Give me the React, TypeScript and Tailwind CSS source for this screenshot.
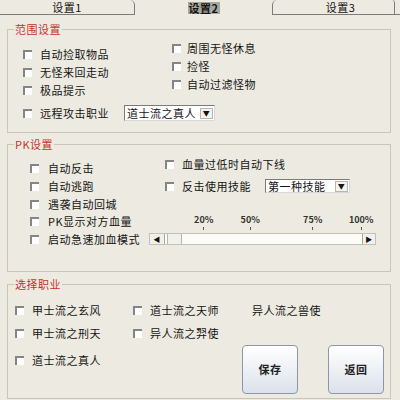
import React from 'react'

const Check = () => (
  <span className="inline-block w-[9px] h-[9px] shrink-0 bg-white border-t-2 border-l-2 border-t-[#858585] border-l-[#858585]" />
)

function Row({ label, gap = 'ml-[8px]', h = 'h-[18px]' }: { label: string; gap?: string; h?: string }) {
  return (
    <div className={`flex items-center ${h}`}>
      <Check />
      <span className={gap}>{label}</span>
    </div>
  )
}

function Select({ value, w, h }: { value: string; w: string; h: string }) {
  return (
    <div className={`flex items-center justify-between bg-white border border-t-[#7a7a7a] border-l-[#7a7a7a] border-r-[#d8d8d8] border-b-[#d8d8d8] ${w} ${h}`}>
      <span className="pl-[2px] leading-none">{value}</span>
      <span className="flex items-center justify-center w-[13px] h-[11px] mr-[1px] bg-[#f4f3ee] border border-[#b9b7ad] text-[7px] leading-none">▼</span>
    </div>
  )
}

function Group({ title, className, children }: { title: string; className: string; children: React.ReactNode }) {
  return (
    <div className={`relative ml-[7px] w-[384px] border border-[#c9c6b6] ${className}`}>
      <span className="absolute -top-[8px] left-[6px] px-[1px] bg-[#edebe1] text-[#c4332c] leading-[14px]">{title}</span>
      {children}
    </div>
  )
}

const scale = [
  { label: '20%', ml: 'ml-[40px]' },
  { label: '50%', ml: 'ml-[17px]' },
  { label: '75%', ml: 'ml-[33px]' },
  { label: '100%', ml: 'ml-[19px]' },
]

export default function App() {
  return (
    <div className="w-[400px] h-[400px] overflow-hidden bg-[#edebe1] text-[11px] tracking-[0.5px] text-[#141414] font-['Noto_Sans_CJK_SC',sans-serif]">
      {/* Tabs */}
      <div className="flex h-[15px]">
        <div className="w-[135px] flex items-center justify-center border-b border-r border-[#7c7c7c] rounded-tr-[5px]">设置1</div>
        <div className="w-[137px] flex items-center justify-center">
          <span className="bg-[#a9a8a0] font-bold leading-[12px] px-[1px]">设置2</span>
        </div>
        <div className="w-[123px] flex items-center justify-center pl-[14px] border-b border-l border-r border-[#7c7c7c] rounded-tl-[5px] rounded-tr-[3px]">设置3</div>
        <div className="flex-1 border-b border-[#7c7c7c]" />
      </div>

      {/* 范围设置 */}
      <Group title="范围设置" className="mt-[14px] h-[104px]">
        <div className="flex">
          <div className="w-[164px] pl-[15px] pt-[15px] flex flex-col">
            <Row label="自动捡取物品" />
            <Row label="无怪来回走动" />
            <Row label="极品提示" />
          </div>
          <div className="pt-[9px] flex flex-col">
            <Row label="周围无怪休息" gap="ml-[6px]" />
            <Row label="捡怪" gap="ml-[6px]" />
            <Row label="自动过滤怪物" gap="ml-[6px]" />
          </div>
        </div>
        <div className="flex items-center h-[18px] mt-[5px] pl-[15px]">
          <Check />
          <span className="ml-[8px] w-[84px]">远程攻击职业</span>
          <Select value="道士流之真人" w="w-[91px]" h="h-[16px]" />
        </div>
      </Group>

      {/* PK设置 */}
      <Group title="PK设置" className="mt-[11px] h-[128px]">
        <div className="flex">
          <div className="w-[157px] pl-[22px] pt-[14px] flex flex-col">
            <Row label="自动反击" gap="ml-[9px]" />
            <Row label="自动逃跑" gap="ml-[9px]" />
            <Row label="遇袭自动回城" gap="ml-[9px]" />
          </div>
          <div className="pt-[10px] flex flex-col">
            <Row label="血量过低时自动下线" />
            <div className="flex items-center h-[18px] mt-[4px]">
              <Check />
              <span className="ml-[8px] w-[83px]">反击使用技能</span>
              <Select value="第一种技能" w="w-[85px]" h="h-[14px]" />
            </div>
          </div>
        </div>
        <div className="pl-[22px]">
          <div className="flex h-[17px]">
            <div className="w-[119px] flex items-center">
              <Check />
              <span className="ml-[9px]">PK显示对方血量</span>
            </div>
            <div className="w-[227px] flex">
              {scale.map((s) => (
                <div key={s.label} className={`w-[30px] flex flex-col items-center pt-[1px] ${s.ml}`}>
                  <span className="text-[9px] leading-[12px] tracking-normal font-bold text-[#333]">{s.label}</span>
                  <span className="w-px h-[3px] mt-[1px] bg-[#555]" />
                </div>
              ))}
            </div>
          </div>
          <div className="flex items-center h-[18px]">
            <div className="w-[119px] flex items-center">
              <Check />
              <span className="ml-[9px]">启动急速加血模式</span>
            </div>
            <div className="w-[227px] h-[12px] flex bg-[#fbfbf8] border border-[#c3c1b6]">
              <span className="w-[15px] flex items-center justify-center bg-[#f1f0ea] border-r border-[#a9a79d] text-[7px] leading-none">◀</span>
              <span className="w-[15px] ml-[2px] bg-[#f1f0ea] border-x border-[#b9b7ad]" />
              <span className="flex-1" />
              <span className="w-[13px] flex items-center justify-center bg-[#f1f0ea] border-l border-[#a9a79d] text-[7px] leading-none">▶</span>
            </div>
          </div>
        </div>
      </Group>

      {/* 选择职业 */}
      <Group title="选择职业" className="mt-[12px] h-[115px]">
        <div className="grid grid-cols-[118px_119px_1fr] gap-y-[5px] pl-[7px] pt-[16px]">
          <Row label="甲士流之玄风" />
          <Row label="道士流之天师" />
          <div className="flex items-center h-[18px]">异人流之兽使</div>
          <Row label="甲士流之刑天" />
          <Row label="异人流之羿使" />
        </div>
        <div className="flex items-start pl-[7px]">
          <div className="w-[227px] pt-[9px]">
            <Row label="道士流之真人" />
          </div>
          <button className="mt-[3px] w-[56px] h-[49px] rounded-[4px] border border-[#8d97a8] bg-gradient-to-b from-white to-[#dce1eb] font-bold text-[11px] text-[#222]">
            保存
          </button>
          <button className="mt-[3px] ml-[30px] w-[56px] h-[49px] rounded-[4px] border border-[#8d97a8] bg-gradient-to-b from-white to-[#dce1eb] font-bold text-[11px] text-[#222]">
            返回
          </button>
        </div>
      </Group>
    </div>
  )
}
